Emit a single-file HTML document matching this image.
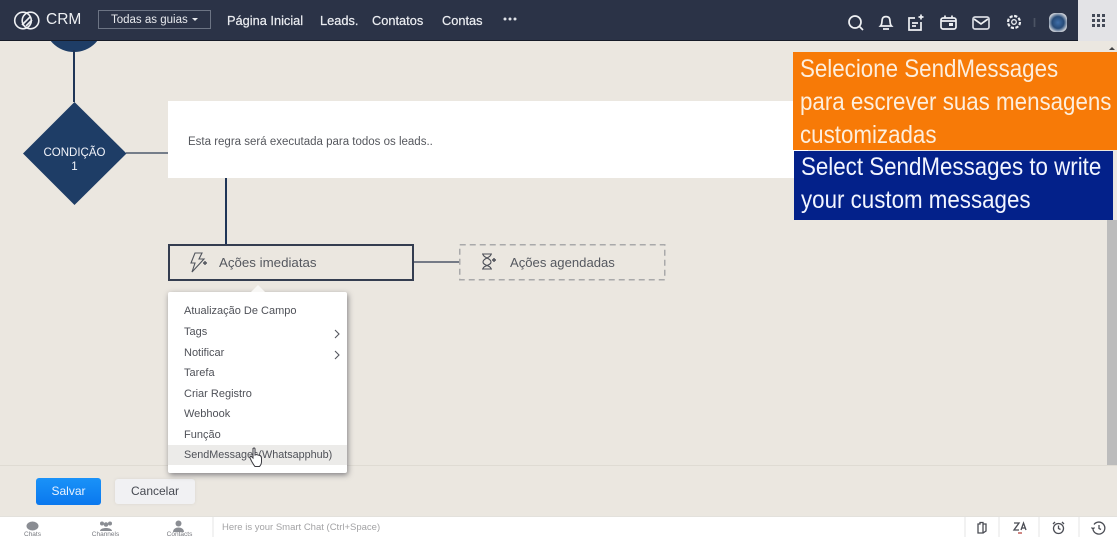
<!DOCTYPE html>
<html lang="pt"><head><meta charset="utf-8"><title>CRM</title>
<style>
html,body{margin:0;padding:0}
body{width:1117px;height:542px;overflow:hidden;position:relative;background:#ebe7e0;font-family:"Liberation Sans",sans-serif;color:#4a4d55}
.a{position:absolute;white-space:nowrap}
.nav{top:13px;font-size:12.8px;line-height:15px;color:#eceef2;-webkit-text-stroke:.2px #eceef2}
.m{left:184px;font-size:11px;line-height:14px;color:#4f5158}
.o{position:absolute;white-space:nowrap;font-family:"Liberation Sans",sans-serif;font-size:25px;line-height:32px;transform-origin:0 0;transform:scaleX(.893)}
svg{position:absolute;overflow:visible}
</style></head><body>

<!-- canvas shapes -->
<svg style="left:0;top:0" width="1117" height="542">
<circle cx="74" cy="22" r="30" fill="#1e3d66"/>
<path d="M74 50V102" stroke="#1f3557" stroke-width="2"/>
<path d="M74.500 102L126.500 153.500L74.500 205L23 153.500z" fill="#1e3d66"/>
<path d="M126 153H168" stroke="#4e5a6c" stroke-width="1.500"/>
<path d="M226 178V244" stroke="#1f3557" stroke-width="2"/>
<path d="M413 262H460" stroke="#4e5668" stroke-width="1.500"/>
</svg>

<!-- top bar -->
<div class="a" style="left:0;top:0;width:1078px;height:40px;background:#2b3347;border-bottom:1px solid #161b28"></div>
<div class="a" style="left:1078px;top:0;width:39px;height:41px;background:#e3e3e6"></div>
<svg style="left:14px;top:11px" width="28" height="20" fill="none" stroke="#eef0f3" stroke-width="1.600">
<circle cx="9" cy="9.500" r="8.300"/><circle cx="16.500" cy="9.500" r="8.300"/><path d="M8 14l8-8M12 15l6-6"/>
</svg>
<div class="a" style="left:46px;top:11px;font-size:15.500px;line-height:18px;color:#eef0f3">CRM</div>
<div class="a" style="left:98px;top:10px;width:111px;height:17px;border:1px solid #6c7484"></div>
<div class="a" style="left:111px;top:13px;font-size:11.500px;line-height:14px;color:#e8eaee">Todas as guias</div>
<div class="a" style="left:192px;top:18px;border-left:3.500px solid transparent;border-right:3.500px solid transparent;border-top:3.500px solid #e8eaee"></div>
<div class="a nav" style="left:227px">Página Inicial</div>
<div class="a nav" style="left:320px">Leads.</div>
<div class="a nav" style="left:372px">Contatos</div>
<div class="a nav" style="left:442px">Contas</div>
<svg style="left:503px;top:17px" width="15" height="5" fill="#dfe2e8"><circle cx="2" cy="2" r="1.500"/><circle cx="7" cy="2" r="1.500"/><circle cx="12" cy="2" r="1.500"/></svg>

<svg style="left:0;top:0" width="1117" height="41" fill="none" stroke="#eef0f3" stroke-width="1.700">
<circle cx="855" cy="22" r="6"/><path d="M859.500 26.500L863 30"/>
<path d="M880.500 26c2-2 1-5 2-7.500s6-2.500 7 0 0 5.500 2 7.500zM883 29h6"/>
<path d="M915 18h-6v12h12v-8M912 23h6M912 26h4M921 14.500v5M918.500 17h5"/>
<rect x="941" y="18" width="15" height="11" rx="2"/><path d="M941 21h15M945 15.500v2M952 15.500v2"/><rect x="949" y="23" width="4" height="3" fill="#eef0f3" stroke="none"/>
<rect x="973" y="17" width="16" height="12" rx="2" stroke="#d5d8e0"/><path d="M974 19l7 5 7-5"/>
<circle cx="1014" cy="22" r="2.300" stroke-width="1.300"/><circle cx="1014" cy="22" r="6" stroke-dasharray="3.200 1.500" stroke-width="2.200"/>
<path d="M1034.500 18v9" stroke="#4b5364"/>
</svg>
<div class="a" style="left:1049px;top:13px;width:18px;height:19px;border-radius:6px;background:radial-gradient(circle at 50% 50%,#3f6ea8 0,#274b78 45%,#c9ced6 75%)"></div>
<svg style="left:1092px;top:14px" width="13" height="13" fill="#444a58">
<rect x="0" y="0" width="3" height="3"/><rect x="5" y="0" width="3" height="3"/><rect x="10" y="0" width="3" height="3"/>
<rect x="0" y="5" width="3" height="3"/><rect x="5" y="5" width="3" height="3"/><rect x="10" y="5" width="3" height="3"/>
<rect x="0" y="10" width="3" height="3"/><rect x="5" y="10" width="3" height="3"/><rect x="10" y="10" width="3" height="3"/>
</svg>

<!-- scrollbar -->
<div class="a" style="left:1107px;top:220px;width:10px;height:245px;background:#bcbcbc"></div>
<div class="a" style="left:1109px;top:47px;border-left:3px solid transparent;border-right:3px solid transparent;border-bottom:3px solid #444"></div>

<!-- condition -->
<div class="a" style="left:23px;top:146px;width:103px;text-align:center;font-size:11.500px;line-height:14px;color:#f2f4fa">CONDIÇÃO<br>1</div>
<div class="a" style="left:168px;top:101px;width:640px;height:77px;background:#fff"></div>
<div class="a" style="left:188px;top:135px;font-size:11.500px;line-height:14px;color:#55575d">Esta regra será executada para todos os leads..</div>

<!-- actions -->
<div class="a" style="left:168px;top:244px;width:246px;height:36.500px;box-sizing:border-box;border:2px solid #343d50"></div>
<svg style="left:189px;top:252px" width="20" height="21" fill="none" stroke="#50545c" stroke-width="1.100">
<path d="M6 1h7l-3 6h5L3 20l3-9H2z"/><path d="M16 9v4M14 11h4" stroke-width="1.400"/>
</svg>
<div class="a" style="left:219px;top:254px;font-size:13.300px;line-height:17px;color:#55585f">Ações imediatas</div>

<svg style="left:0;top:0" width="1117" height="542"><rect x="459.750" y="244.750" width="205" height="35" fill="none" stroke="#a9a9aa" stroke-width="1.500" stroke-dasharray="6 4"/></svg>
<svg style="left:480px;top:253px" width="18" height="18" fill="none" stroke="#4c4f57" stroke-width="1.100">
<path d="M2 1h10M2 16h10M3 1c0 4 8 4 8 8s-8 3-8 7M11 1c0 4-8 4-8 8s8 3 8 7"/><path d="M14 5v4M12 7h4" stroke-width="1.400"/>
</svg>
<div class="a" style="left:510px;top:254px;font-size:13.100px;line-height:17px;color:#55585f">Ações agendadas</div>

<!-- footer -->
<div class="a" style="left:0;top:465px;width:1117px;height:1px;background:#dfdbd3"></div>
<div class="a" style="left:36px;top:478px;width:65px;height:27px;background:linear-gradient(#1a92f8,#0a78ee);border-radius:3px;color:#e8f2ff;font-size:12px;line-height:27px;text-align:center">Salvar</div>
<div class="a" style="left:115px;top:479px;width:80px;height:25px;background:#f1f1f3;border-radius:3px;box-shadow:0 0 3px #d9d6d0;color:#474a52;font-size:12px;line-height:25px;text-align:center">Cancelar</div>

<!-- dropdown -->
<div class="a" style="left:168px;top:292px;width:179px;height:181px;background:#fff;border-radius:2px;box-shadow:1px 2px 6px rgba(60,60,70,.6)"></div>
<div class="a" style="left:251px;top:285px;border-left:7px solid transparent;border-right:7px solid transparent;border-bottom:7px solid #f8f7f5"></div>
<div class="a" style="left:168px;top:445px;width:179px;height:20px;background:#ecebe9"></div>
<div class="a m" style="top:304px">Atualização De Campo</div>
<div class="a m" style="top:325px">Tags</div>
<div class="a m" style="top:346px">Notificar</div>
<div class="a m" style="top:366px">Tarefa</div>
<div class="a m" style="top:387px">Criar Registro</div>
<div class="a m" style="top:407px">Webhook</div>
<div class="a m" style="top:428px">Função</div>
<div class="a m" style="top:448px;font-size:10.800px">SendMessages(Whatsapphub)</div>
<svg style="left:333px;top:329px" width="8" height="32" fill="none" stroke="#55575f" stroke-width="1.100">
<path d="M2 1l4 4-4 4M2 22l4 4-4 4"/>
</svg>
<svg style="left:249px;top:447px" width="14" height="21">
<path d="M4 1.500c1-1 2-.5 2 .5v6l1.500-.5 1.500.5 2 .5c1 .5 1.500 1.500 1.500 3v3c0 2-1 4-2 5H6c-1-1-2-3-3-4.500L1 11c-.5-1 .5-2 1.500-1.500L4 11z" fill="#fff" stroke="#3a3a40" stroke-width="1"/>
</svg>

<!-- bottom bar -->
<div class="a" style="left:0;top:516px;width:1117px;height:26px;background:#fff;border-top:1px solid #e3e1dc;box-sizing:border-box"></div>
<svg style="left:0;top:0" width="1117" height="542">
<ellipse cx="32.500" cy="526" rx="6" ry="4.500" fill="#8a8d93"/>
<g fill="#8a8d93"><circle cx="102" cy="523.500" r="2"/><circle cx="110" cy="523.500" r="2"/><circle cx="106" cy="524.500" r="2.300"/><path d="M100 531c0-4 12-4 12 0z"/>
<circle cx="178.500" cy="523.500" r="3"/><path d="M173 532c0-6 11-6 11 0z"/></g>
<path d="M213 517v20M965 517v20M999 517v20M1039 517v20M1079 517v20" stroke="#e4e4e4"/>
<g fill="none" stroke="#4b4d55" stroke-width="1.300">
<path d="M978 524h2v-1.500h3V533h-5zM983 524h3v7l-3 2"/>
<path d="M1014 523h5l-5 7h5M1021 530l2.500-7 2.500 7M1022 528h3"/>
<circle cx="1058.500" cy="528.500" r="5"/><path d="M1058.500 525.500v3l2 1M1053 524l2-2M1064 524l-2-2"/>
<path d="M1094 524.500a6 6 0 1 1-1 5M1099 525v3.500l2 1M1091.500 527.500l1.500 1.500 1.500-1.500"/>
</g>
<path d="M1018 533h4" stroke="#c0605a" stroke-width="1.500"/>
</svg>
<div class="a" style="left:0;top:531px;width:65px;text-align:center;font-size:6.500px;line-height:8px;color:#77797f">Chats</div>
<div class="a" style="left:73px;top:531px;width:65px;text-align:center;font-size:6.500px;line-height:8px;color:#77797f">Channels</div>
<div class="a" style="left:147px;top:531px;width:65px;text-align:center;font-size:6.500px;line-height:8px;color:#77797f">Contacts</div>
<div class="a" style="left:0;top:537px;width:1117px;height:5px;background:#fff"></div>
<div class="a" style="left:222px;top:522px;font-size:9.500px;line-height:12px;color:#a3a3a5">Here is your Smart Chat (Ctrl+Space)</div>

<!-- overlay banners -->
<div class="a" style="left:793px;top:52px;width:324px;height:98px;background:#f77a07"></div>
<div class="a" style="left:794px;top:151px;width:319px;height:69px;background:#03218a"></div>
<div class="o" style="left:800px;top:53px;color:#fdeedd">Selecione SendMessages</div>
<div class="o" style="left:800px;top:86px;color:#fdeedd">para escrever suas mensagens</div>
<div class="o" style="left:800px;top:119px;color:#fdeedd">customizadas</div>
<div class="o" style="left:801px;top:151px;color:#f2f5ff">Select SendMessages to write</div>
<div class="o" style="left:801px;top:184px;color:#f2f5ff">your custom messages</div>

</body></html>
